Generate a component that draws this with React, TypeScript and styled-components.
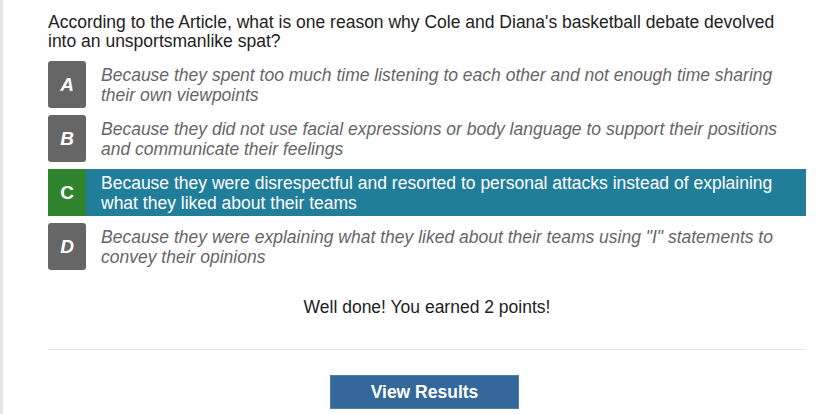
import React from "react";
import styled, { createGlobalStyle, css } from "styled-components";

const GlobalStyle = createGlobalStyle`
  html, body {
    margin: 0;
    padding: 0;
    background: #ffffff;
  }
  body {
    font-family: "Liberation Sans", Arial, sans-serif;
  }
`;

const Page = styled.div`
  box-sizing: border-box;
  min-height: 414px;
  border-left: 3px solid #e4e4e4;
  padding: 13px 27px 0 45px;
`;

const Question = styled.p`
  margin: 0 20px 10px 0;
  font-size: 17.5px;
  line-height: 19px;
  color: #222222;
`;

const Options = styled.div`
  display: flex;
  flex-direction: column;
  gap: 7px;
`;

const Row = styled.div<{ $selected?: boolean }>`
  display: flex;
  align-items: stretch;
  min-height: 47px;
  background: ${(p) => (p.$selected ? "#217e9b" : "transparent")};
`;

const Badge = styled.div<{ $selected?: boolean }>`
  flex: 0 0 38px;
  display: flex;
  align-items: center;
  justify-content: center;
  color: #ffffff;
  font-size: 19px;
  font-weight: bold;
  ${(p) =>
    p.$selected
      ? css`
          background: #30832f;
          font-style: normal;
        `
      : css`
          background: #666666;
          border-radius: 3px;
          font-style: italic;
        `}
`;

const OptionText = styled.div<{ $selected?: boolean }>`
  flex: 1;
  display: flex;
  align-items: center;
  padding: 3px 12px 3px 15px;
  font-size: 17.5px;
  line-height: 20px;
  color: ${(p) => (p.$selected ? "#ffffff" : "#666666")};
  font-style: ${(p) => (p.$selected ? "normal" : "italic")};
`;

const Feedback = styled.p`
  margin: 27px 0 0;
  text-align: center;
  font-size: 17.5px;
  line-height: 20px;
  color: #222222;
`;

const Divider = styled.hr`
  margin: 32px 0 0;
  border: 0;
  height: 1px;
  background: #e6e6e6;
`;

const Footer = styled.div`
  display: flex;
  justify-content: center;
  padding: 25px 5px 0 0;
`;

const ResultsButton = styled.button`
  width: 189px;
  height: 34px;
  border: 1px solid #4a7fb0;
  border-radius: 0;
  background: #34679a;
  color: #ffffff;
  font-family: "Liberation Sans", Arial, sans-serif;
  font-size: 17.5px;
  font-weight: bold;
  cursor: pointer;
`;

const options = [
  {
    letter: "A",
    text: "Because they spent too much time listening to each other and not enough time sharing their own viewpoints",
  },
  {
    letter: "B",
    text: "Because they did not use facial expressions or body language to support their positions and communicate their feelings",
  },
  {
    letter: "C",
    text: "Because they were disrespectful and resorted to personal attacks instead of explaining what they liked about their teams",
    selected: true,
  },
  {
    letter: "D",
    text: 'Because they were explaining what they liked about their teams using "I" statements to convey their opinions',
  },
];

export default function App() {
  return (
    <>
      <GlobalStyle />
      <Page>
        <Question>
          According to the Article, what is one reason why Cole and Diana's basketball debate devolved into an unsportsmanlike spat?
        </Question>
        <Options>
          {options.map((o) => (
            <Row key={o.letter} $selected={o.selected}>
              <Badge $selected={o.selected}>{o.letter}</Badge>
              <OptionText $selected={o.selected}>{o.text}</OptionText>
            </Row>
          ))}
        </Options>
        <Feedback>Well done! You earned 2 points!</Feedback>
        <Divider />
        <Footer>
          <ResultsButton>View Results</ResultsButton>
        </Footer>
      </Page>
    </>
  );
}
